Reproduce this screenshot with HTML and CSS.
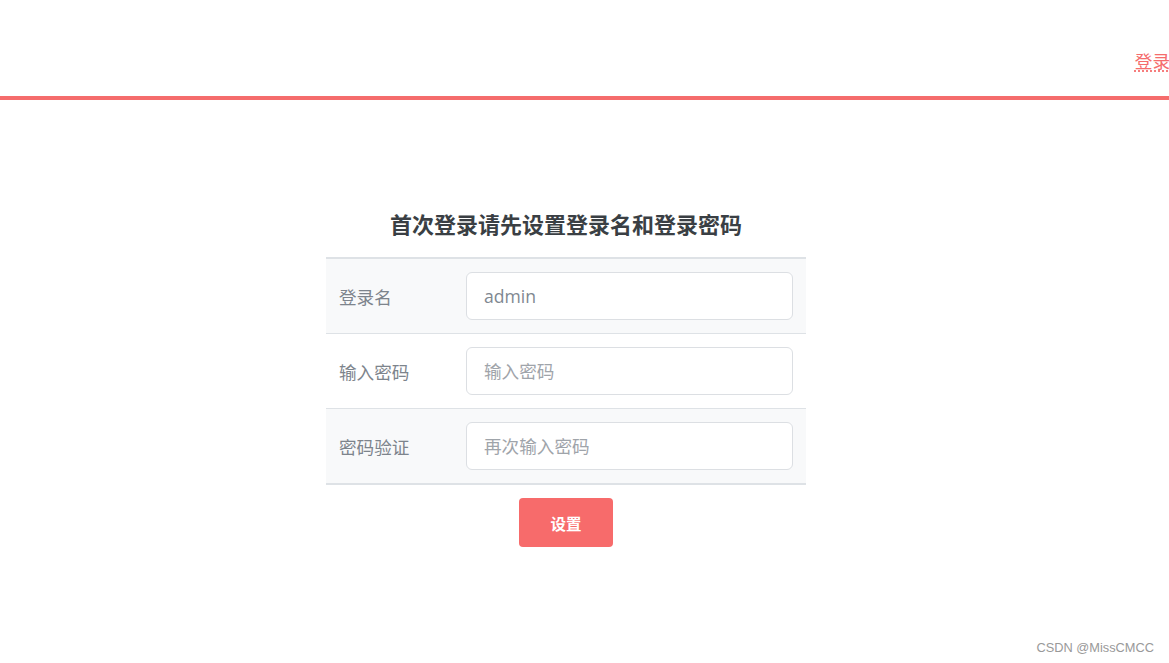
FILE: index.html
```html
<!DOCTYPE html>
<html lang="zh-CN">
<head>
<meta charset="utf-8">
<title>设置登录名</title>
<link rel="stylesheet" href="styles.css">
</head>
<body>
<header class="topbar">
  <a class="login-link" href="#">登录</a>
</header>
<main class="main">
  <div class="panel">
    <h4 class="title">首次登录请先设置登录名和登录密码</h4>
    <div class="form-table">
      <div class="row striped">
        <label class="label">登录名</label>
        <input class="input value" type="text" value="admin">
      </div>
      <div class="row">
        <label class="label">输入密码</label>
        <input class="input" type="password" placeholder="输入密码">
      </div>
      <div class="row striped">
        <label class="label">密码验证</label>
        <input class="input" type="password" placeholder="再次输入密码">
      </div>
    </div>
    <button class="btn" type="button">设置</button>
  </div>
</main>
<div class="watermark">CSDN @MissCMCC</div>
</body>
</html>
```
FILE: styles.css
```css
* { box-sizing: border-box; }
html, body { margin: 0; padding: 0; background: #fff; }
body {
  font-family: "Open Sans", "Noto Sans CJK SC", sans-serif;
  color: #333;
  width: 1169px;
  height: 663px;
  overflow: hidden;
  position: relative;
}
.topbar {
  height: 100px;
  border-bottom: 4px solid #f56c6c;
  display: flex;
  justify-content: flex-end;
  align-items: flex-start;
  padding-top: 48px;
}
.login-link {
  font-size: 17.6px;
  line-height: 26px;
  color: #f56c6c;
  text-decoration: underline dotted;
  text-underline-offset: 3px;
  margin-right: -1px;
}
.main {
  display: flex;
  padding-left: 326px;
  padding-top: 110px;
}
.panel {
  width: 480px;
  display: flex;
  flex-direction: column;
  align-items: center;
}
.title {
  margin: 0 0 18px;
  font-size: 22px;
  line-height: 29px;
  font-weight: 700;
  color: #3a3f44;
}
.form-table {
  width: 100%;
  border-top: 2px solid #dee2e6;
  border-bottom: 2px solid #dee2e6;
}
.row {
  display: flex;
  align-items: center;
  padding: 13px 13px;
  border-top: 1px solid #dee2e6;
}
.row:first-child { border-top: 0; }
.striped { background: #f8f9fa; }
.label {
  width: 127px;
  font-size: 17.6px;
  color: #7d848c;
}
.input {
  flex: 1;
  height: 48px;
  border: 1px solid #dcdfe3;
  border-radius: 6px;
  background: #fff;
  padding: 0 17px;
  font-family: "Open Sans", "Noto Sans CJK SC", sans-serif;
  font-size: 17.6px;
  color: #7f8891;
  outline: none;
}
.input::placeholder { color: #9fa4aa; }
.btn {
  margin-top: 13px;
  width: 94px;
  height: 49px;
  border: 0;
  border-radius: 4px;
  background: #f76b6b;
  color: #fff;
  font-family: "Noto Sans CJK SC", sans-serif;
  font-size: 15.5px;
  font-weight: 700;
}
.watermark {
  position: absolute;
  right: 15px;
  bottom: 8px;
  font-family: "Liberation Sans", Arial, sans-serif;
  font-size: 12.8px;
  color: #999;
}
```
